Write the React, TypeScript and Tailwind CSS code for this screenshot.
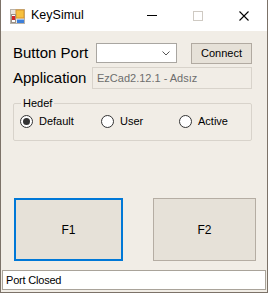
import { useState } from "react";

const FONT = { fontFamily: '"Liberation Sans", Arial, sans-serif' };

function AppIcon() {
  return (
    <svg width="15" height="15" viewBox="0 0 15 15" aria-hidden="true">
      <rect x="0.5" y="0.5" width="14" height="14" fill="#e8e4de" stroke="#b9b3aa" />
      <rect x="6" y="1" width="8" height="8" fill="#f6c13f" stroke="#d9932a" />
      <rect x="1.5" y="5.5" width="4" height="8" fill="#ffffff" stroke="#9a8f86" />
      <rect x="2" y="7" width="3" height="4" fill="#d2262a" />
      <rect x="7" y="10" width="7" height="4" fill="#3d7fd9" />
      <rect x="7" y="10" width="7" height="1" fill="#9cc0ef" />
    </svg>
  );
}

function Radio({ label, checked, onClick, className }: { label: string; checked: boolean; onClick: () => void; className: string }) {
  return (
    <button type="button" onClick={onClick} className={`flex items-center gap-[6px] ${className}`}>
      <span className="flex h-[13px] w-[13px] items-center justify-center rounded-full border border-[#333333] bg-white">
        {checked && <span className="h-[7px] w-[7px] rounded-full bg-[#333333]" />}
      </span>
      <span className="text-[11px] leading-[13px] text-black">{label}</span>
    </button>
  );
}

export default function App() {
  const [hedef, setHedef] = useState("Default");

  return (
    <div style={FONT} className="flex h-[293px] w-[268px] flex-col border-x border-b border-[#7c7268] bg-[#f1ede6]">
      {/* title bar */}
      <div className="flex h-[31px] shrink-0 items-center bg-white">
        <div className="ml-[9px] mt-[1px]">
          <AppIcon />
        </div>
        <span className="ml-[6px] text-[12.5px] text-black">KeySimul</span>
        <div className="ml-auto flex h-full">
          <div className="flex w-[46px] items-center justify-center">
            <span className="block h-px w-[10px] bg-black" />
          </div>
          <div className="flex w-[46px] items-center justify-center">
            <span className="block h-[10px] w-[10px] border border-[#cfcac3]" />
          </div>
          <div className="flex w-[46px] items-center justify-center">
            <svg width="10" height="10" viewBox="0 0 10 10" aria-hidden="true">
              <path d="M0.5 0.5 L9.5 9.5 M9.5 0.5 L0.5 9.5" stroke="#000" strokeWidth="1.1" />
            </svg>
          </div>
        </div>
      </div>

      <div className="flex flex-1 flex-col pl-[12px]">
        {/* Button Port row */}
        <div className="mt-[12px] flex h-[21px] items-start">
          <span className="w-[83px] text-[15px] leading-[20px] text-black">Button Port</span>
          <div className="flex h-[20px] w-[81px] items-center justify-end border border-[#a9a6a1] bg-white pr-[6px]">
            <svg width="8" height="5" viewBox="0 0 8 5" aria-hidden="true">
              <path d="M0.5 0.5 L4 4 L7.5 0.5" fill="none" stroke="#555" strokeWidth="1" />
            </svg>
          </div>
          <button
            type="button"
            className="ml-[14px] h-[21px] w-[61px] border border-[#b1aaa1] bg-[#e6e1d8] text-[11px] text-black"
          >
            Connect
          </button>
        </div>

        {/* Application row */}
        <div className="mt-[3px] flex h-[22px] items-center">
          <span className="w-[79px] text-[15px] leading-[20px] text-black">Application</span>
          <div className="flex h-[22px] w-[160px] items-center border border-[#d8d3cb] bg-[#f1ede6] pl-[4px] text-[11px] text-[#6d6d6d]">
            EzCad2.12.1 - Adsız
          </div>
        </div>

        {/* Hedef group */}
        <fieldset className="mt-[8px] w-[239px] rounded-[2px] border border-[#d8d3cb] pb-[12px] pt-[5px]">
          <legend className="ml-[7px] px-[2px] text-[11px] leading-[13px] text-black">Hedef</legend>
          <div className="flex pl-[6px]">
            <Radio label="Default" checked={hedef === "Default"} onClick={() => setHedef("Default")} className="w-[81px]" />
            <Radio label="User" checked={hedef === "User"} onClick={() => setHedef("User")} className="w-[78px]" />
            <Radio label="Active" checked={hedef === "Active"} onClick={() => setHedef("Active")} className="w-[60px]" />
          </div>
        </fieldset>

        {/* F buttons */}
        <div className="mt-[57px] flex">
          <button
            type="button"
            className="ml-[1px] h-[63px] w-[109px] border-2 border-[#0078d7] bg-[#e6e1d8] text-[12px] text-black"
          >
            F1
          </button>
          <button
            type="button"
            className="ml-[30px] h-[63px] w-[103px] border border-[#b5ada3] bg-[#e6e1d8] text-[12px] text-black"
          >
            F2
          </button>
        </div>
      </div>

      {/* status */}
      <div className="mx-[1px] mb-[2px] flex h-[20px] items-center border border-[#a9a39a] bg-white pl-[3px] text-[11px] tracking-[-0.2px] text-black">
        Port Closed
      </div>
    </div>
  );
}
